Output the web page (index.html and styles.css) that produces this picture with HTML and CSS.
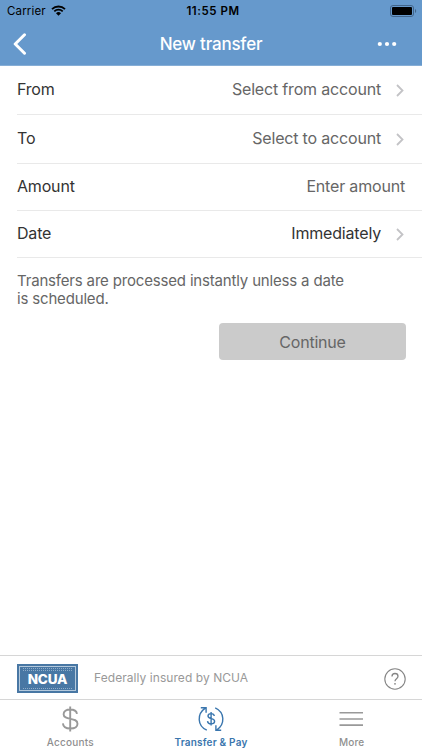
FILE: index.html
```html
<!DOCTYPE html>
<html lang="en">
<head>
    <meta charset="UTF-8">
    <meta name="viewport" content="width=device-width, initial-scale=1.0">
    <title>New transfer</title>
    <link rel="stylesheet" href="styles.css">
</head>
<body>
    <header>
        <div class="status-bar">
            <div class="carrier">
                <span>Carrier</span>
                <svg width="15" height="11" viewBox="0 0 15 11">
                    <path d="M1 4.1a9.4 9.4 0 0 1 13 0M3.3 6.4a6.1 6.1 0 0 1 8.4 0" fill="none" stroke="#000" stroke-width="1.8"/>
                    <path d="M5 8.3a3.6 3.6 0 0 1 5 0L7.5 10.8z"/>
                </svg>
            </div>
            <span class="time">11:55 PM</span>
            <svg class="battery" width="27" height="12" viewBox="0 0 27 12">
                <rect x="0.5" y="0.5" width="23" height="11" rx="2.5" fill="none" stroke="#42658a"/>
                <rect x="2" y="2" width="20" height="8" rx="1"/>
                <path d="M25 4v4c1.6-.6 1.6-3.4 0-4z" fill="#42658a"/>
            </svg>
        </div>
        <div class="title-bar">
            <svg class="back" width="14" height="22" viewBox="0 0 14 22">
                <path d="M11.5 1.8L2.2 11l9.3 9.2" fill="none" stroke="#fff" stroke-width="3" stroke-linecap="round" stroke-linejoin="round"/>
            </svg>
            <h1>New transfer</h1>
            <svg class="dots" width="20" height="6" viewBox="0 0 20 6" fill="#fff">
                <circle cx="2.8" cy="3" r="2.1"/>
                <circle cx="10" cy="3" r="2.1"/>
                <circle cx="17.2" cy="3" r="2.1"/>
            </svg>
        </div>
    </header>

    <main>
        <div class="row row-from">
            <span class="label">From</span>
            <span class="value">Select from account</span>
            <svg class="chevron" width="8" height="13" viewBox="0 0 8 13"><path d="M1 1l5.5 5.5L1 12"/></svg>
        </div>
        <div class="row row-to">
            <span class="label">To</span>
            <span class="value">Select to account</span>
            <svg class="chevron" width="8" height="13" viewBox="0 0 8 13"><path d="M1 1l5.5 5.5L1 12"/></svg>
        </div>
        <div class="row">
            <span class="label">Amount</span>
            <span class="value">Enter amount</span>
        </div>
        <div class="row">
            <span class="label">Date</span>
            <span class="value date-value">Immediately</span>
            <svg class="chevron" width="8" height="13" viewBox="0 0 8 13"><path d="M1 1l5.5 5.5L1 12"/></svg>
        </div>
        <p class="note">Transfers are processed instantly unless a date<br>is scheduled.</p>
        <button type="button" class="continue">Continue</button>
    </main>

    <div class="insured">
        <div class="ncua">
            <div class="ncua-frame">NCUA</div>
        </div>
        <span class="insured-text">Federally insured by NCUA</span>
        <svg class="help" width="22" height="22" viewBox="0 0 22 22" fill="none" stroke="#858585">
            <circle cx="11" cy="11" r="10.2" stroke-width="1.1"/>
            <path d="M8 8.4C8 6.6 9.3 5.5 11 5.5s3 1.1 3 2.7c0 2.4-3 2.5-3 5" stroke-width="1.3"/>
            <circle cx="11" cy="15.8" r="0.9" fill="#858585" stroke="none"/>
        </svg>
    </div>

    <nav>
        <a class="tab">
            <svg width="26" height="26" viewBox="0 0 26 26" fill="none" stroke="#999" stroke-width="1.9">
                <path d="M20 7.8C19.5 5 17 3.5 13.2 3.5c-4 0-6.6 1.8-6.6 4.7 0 6.7 13.9 2.5 13.9 9.5 0 3-2.9 4.8-7.2 4.8-4.4 0-7.1-1.9-7.4-5.2M13.2.5v25"/>
            </svg>
            <span>Accounts</span>
        </a>
        <a class="tab active">
            <svg width="26" height="26" viewBox="0 0 26 26" fill="none" stroke="#3a76ae" stroke-width="1.4">
                <path d="M8.8 24.2C-.9 19.7-1.2 8 7.3 2.2M2.8 1.7h5.3v5.1M17.2 1.8c9.8 4.6 10 16.3 1.5 22.2M23.2 24.3h-5.3v-5.1"/>
                <path d="M16.3 10c-.2-1.5-1.4-2.4-3.2-2.4-1.9 0-3.1.9-3.1 2.4 0 3.6 6.6 1.7 6.6 5.3 0 1.6-1.4 2.6-3.5 2.6-2.1 0-3.4-1-3.6-2.8M13.1 6v13.5"/>
            </svg>
            <span>Transfer &amp; Pay</span>
        </a>
        <a class="tab">
            <svg width="26" height="26" viewBox="0 0 26 26" fill="none" stroke="#999" stroke-width="1.6">
                <path d="M.5 6.8h23.5M.5 13h23.5M.5 19.1h23.5"/>
            </svg>
            <span>More</span>
        </a>
    </nav>
</body>
</html>
```
FILE: styles.css
```css
body {
    font-family: 'Inter', sans-serif;
    background-color: #fff;
    color: #333;
    margin: 0;
    height: 750px;
    overflow: hidden;
    display: flex;
    flex-direction: column;
}

svg {
    display: block;
    flex: none;
}

header {
    background-color: #6699cc;
    box-sizing: border-box;
    height: 66px;
    flex: none;
    border-bottom: 1px solid #86aed6;
}

.status-bar {
    display: grid;
    grid-template-columns: 1fr auto 1fr;
    align-items: center;
    height: 21px;
    padding: 0 5px 0 7px;
    font-size: 11.5px;
    color: #000;
}

.carrier {
    display: flex;
    align-items: center;
    gap: 5px;
    letter-spacing: 0.15px;
}

.time {
    font-weight: 600;
    letter-spacing: 0.55px;
    padding-left: 2px;
}

.battery {
    justify-self: end;
}

.title-bar {
    display: grid;
    grid-template-columns: 1fr auto 1fr;
    align-items: center;
    height: 45px;
    padding: 0 25px 0 13px;
    color: #fff;
}

h1 {
    margin: 0;
    padding-left: 12px;
    font-size: 17px;
    font-weight: 500;
    letter-spacing: -0.2px;
}

.dots {
    justify-self: end;
}

main {
    flex: 1;
    display: flex;
    flex-direction: column;
}

.row {
    display: flex;
    align-items: center;
    box-sizing: border-box;
    height: 47px;
    margin-left: 17px;
    padding: 0 17px 2px 0;
    border-bottom: 1px solid #e9e9e9;
    font-size: 16px;
    letter-spacing: -0.18px;
}

.row-from {
    height: 49px;
    padding-bottom: 3px;
}

.row-to {
    height: 49px;
}

.value {
    margin-left: auto;
    color: #666;
}

.date-value {
    color: #333;
}

.chevron {
    margin: 3px 1px 0 15px;
    fill: none;
    stroke: #c3c3c6;
    stroke-width: 1.8;
}

.note {
    margin: 14px 17px 0;
    font-size: 15px;
    line-height: 18px;
    letter-spacing: -0.17px;
    color: #666;
}

.continue {
    align-self: flex-end;
    width: 187px;
    height: 37px;
    margin: 15px 16px 0 0;
    padding: 0;
    border: none;
    border-radius: 4px;
    background-color: #cbcbcb;
    color: #666;
    font-family: inherit;
    font-size: 16px;
    letter-spacing: -0.2px;
}

.insured {
    display: flex;
    align-items: center;
    box-sizing: border-box;
    height: 44px;
    padding: 2px 16px 0 17px;
    border-top: 1px solid #d6d6d6;
}

.ncua {
    box-sizing: border-box;
    width: 61px;
    height: 29px;
    padding: 2px;
    background-color: #4877a4;
}

.ncua-frame {
    position: relative;
    box-sizing: border-box;
    height: 25px;
    border: 1px solid #b4c9dc;
    color: #fff;
    font-size: 13.5px;
    font-weight: 800;
    letter-spacing: -0.15px;
    line-height: 25px;
    text-align: center;
}

/* fine print above and below the letters */
.ncua-frame::before,
.ncua-frame::after {
    content: "";
    position: absolute;
    left: 3px;
    right: 3px;
    top: 1px;
    height: 3px;
    border-top: 1px dotted #8eacc8;
    border-bottom: 1px dotted #8eacc8;
    box-sizing: border-box;
}

.ncua-frame::after {
    top: auto;
    bottom: 1px;
    height: 1px;
    border-bottom: none;
}

.insured-text {
    margin: -2px 0 0 16px;
    font-size: 12px;
    letter-spacing: 0.06px;
    color: #999;
}

.help {
    margin-left: auto;
}

nav {
    display: grid;
    grid-template-columns: repeat(3, 1fr);
    box-sizing: border-box;
    height: 51px;
    border-top: 1px solid #d6d6d6;
}

.tab {
    display: flex;
    flex-direction: column;
    align-items: center;
    padding-top: 6px;
    color: #8f8f8f;
    font-size: 10px;
    font-weight: 500;
    line-height: 12px;
    letter-spacing: 0.2px;
    gap: 4px;
}

.active {
    color: #3a76ae;
    font-weight: 600;
}
```
